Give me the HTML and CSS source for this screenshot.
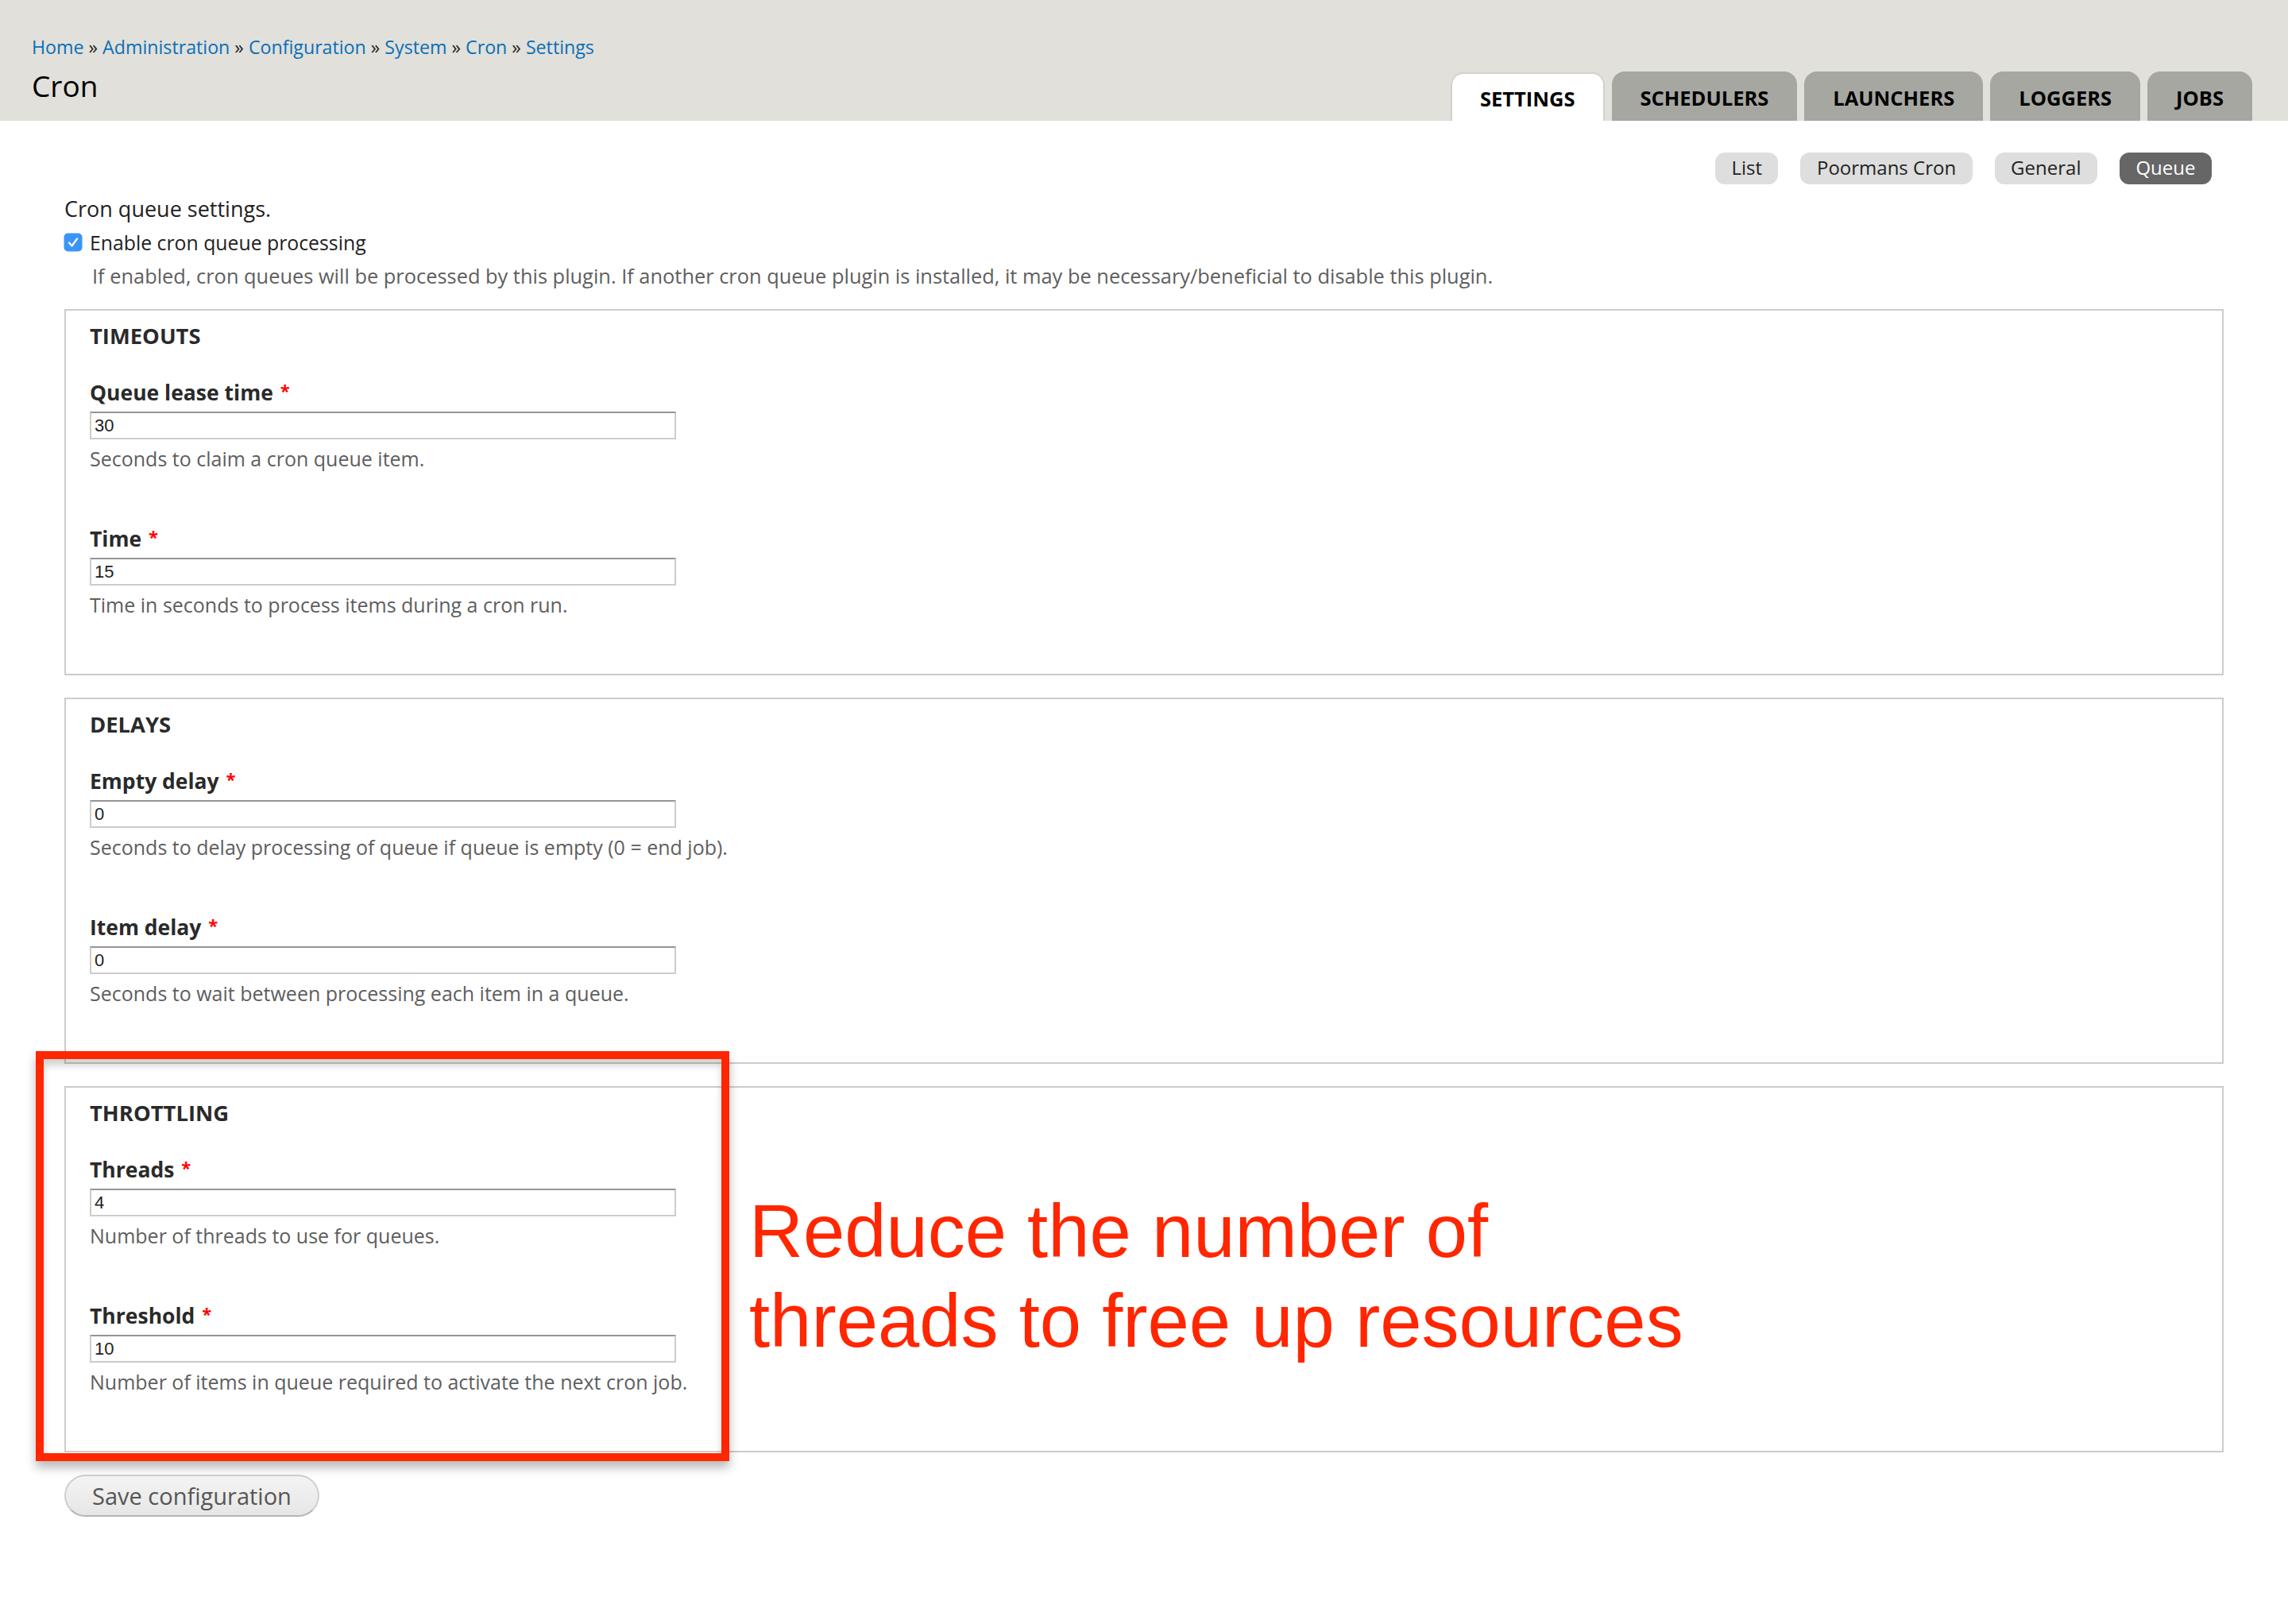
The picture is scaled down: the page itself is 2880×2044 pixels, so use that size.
FILE: index.html
```html
<!DOCTYPE html>
<html lang="en">
<head>
<meta charset="utf-8">
<title>Cron | Settings</title>
<link rel="stylesheet" href="styles.css">
</head>
<body>
<div class="page">
  <header class="page-header">
    <nav class="breadcrumb">
      <a href="#">Home</a> <span class="sep">»</span> <a href="#">Administration</a> <span class="sep">»</span> <a href="#">Configuration</a> <span class="sep">»</span> <a href="#">System</a> <span class="sep">»</span> <a href="#">Cron</a> <span class="sep">»</span> <a href="#">Settings</a>
    </nav>
    <div class="title-row">
      <h1 class="page-title">Cron</h1>
      <ul class="tabs-primary">
        <li class="tab is-active"><a href="#">SETTINGS</a></li>
        <li class="tab"><a href="#">SCHEDULERS</a></li>
        <li class="tab"><a href="#">LAUNCHERS</a></li>
        <li class="tab"><a href="#">LOGGERS</a></li>
        <li class="tab"><a href="#">JOBS</a></li>
      </ul>
    </div>
  </header>

  <main class="content">
    <ul class="tabs-secondary">
      <li class="pill"><a href="#">List</a></li>
      <li class="pill"><a href="#">Poormans Cron</a></li>
      <li class="pill"><a href="#">General</a></li>
      <li class="pill is-active"><a href="#">Queue</a></li>
    </ul>

    <form class="settings-form">
      <p class="intro">Cron queue settings.</p>
      <div class="checkbox-item">
        <span class="checkbox">
          <svg width="24" height="24" viewBox="0 0 24 24" aria-hidden="true">
            <rect x="0.5" y="0.5" width="23" height="23" rx="5" fill="#3b95f8"/>
            <path d="M7 12.5 L10.5 16.5 L17 7.5" fill="none" stroke="#fff" stroke-width="2.2" stroke-linecap="round" stroke-linejoin="round"/>
          </svg>
        </span>
        <label class="checkbox-label">Enable cron queue processing</label>
      </div>
      <div class="description indented">If enabled, cron queues will be processed by this plugin. If another cron queue plugin is installed, it may be necessary/beneficial to disable this plugin.</div>

      <section class="fieldset">
        <h2 class="fieldset-legend">TIMEOUTS</h2>
        <div class="form-item">
          <label class="form-label">Queue lease time <span class="required">*</span></label>
          <input class="form-text" type="text" value="30">
          <div class="description">Seconds to claim a cron queue item.</div>
        </div>
        <div class="form-item">
          <label class="form-label">Time <span class="required">*</span></label>
          <input class="form-text" type="text" value="15">
          <div class="description">Time in seconds to process items during a cron run.</div>
        </div>
      </section>

      <section class="fieldset">
        <h2 class="fieldset-legend">DELAYS</h2>
        <div class="form-item">
          <label class="form-label">Empty delay <span class="required">*</span></label>
          <input class="form-text" type="text" value="0">
          <div class="description">Seconds to delay processing of queue if queue is empty (0 = end job).</div>
        </div>
        <div class="form-item">
          <label class="form-label">Item delay <span class="required">*</span></label>
          <input class="form-text" type="text" value="0">
          <div class="description">Seconds to wait between processing each item in a queue.</div>
        </div>
      </section>

      <section class="fieldset">
        <h2 class="fieldset-legend">THROTTLING</h2>
        <div class="form-item">
          <label class="form-label">Threads <span class="required">*</span></label>
          <input class="form-text" type="text" value="4">
          <div class="description">Number of threads to use for queues.</div>
        </div>
        <div class="form-item">
          <label class="form-label">Threshold <span class="required">*</span></label>
          <input class="form-text" type="text" value="10">
          <div class="description">Number of items in queue required to activate the next cron job.</div>
        </div>
      </section>

      <button class="button" type="button">Save configuration</button>
    </form>
  </main>

  <div class="highlight-box"></div>
  <div class="annotation">Reduce the number of<br>threads to free up resources</div>
</div>
</body>
</html>
```

FILE: styles.css
```css
html, body {
  margin: 0;
  padding: 0;
  background: #ffffff;
}

.page {
  position: relative;
  min-height: 2044px;
  font-family: "Open Sans", "DejaVu Sans", sans-serif;
  color: #2a2a2a;
}

/* ---------- Header ---------- */
.page-header {
  background: #e1e0da;
  padding: 44px 45px 0 40px;
  height: 152px;
  box-sizing: border-box;
}

.breadcrumb {
  font-size: 23.2px;
  line-height: 30px;
  color: #222;
  white-space: nowrap;
}

.breadcrumb a {
  color: #0a6fb8;
  text-decoration: none;
}

.breadcrumb .sep {
  color: #222;
}

.title-row {
  display: flex;
  align-items: flex-end;
  justify-content: space-between;
}

.page-title {
  margin: 10px 0 20px 0;
  font-size: 37px;
  line-height: 48px;
  font-weight: 400;
  color: #000;
}

.tabs-primary {
  list-style: none;
  margin: 0;
  padding: 0;
  display: flex;
  gap: 9px;
  align-items: flex-end;
}

.tab {
  height: 62px;
  box-sizing: border-box;
  background: #a7a7a2;
  border-radius: 16px 16px 0 0;
  display: flex;
  align-items: center;
  padding: 4px 36px 0 36px;
}

.tab a {
  color: #000;
  text-decoration: none;
  font-weight: 700;
  font-size: 25.5px;
  line-height: 30px;
}

.tab.is-active {
  background: #ffffff;
  border: 2px solid #d2d1cc;
  border-bottom: none;
  height: 61px;
  padding: 3px 35px 0 35px;
}

/* ---------- Content ---------- */
.content {
  padding: 0 81px;
}

.tabs-secondary {
  list-style: none;
  margin: 40px 15px 0 0;
  padding: 0;
  display: flex;
  justify-content: flex-end;
  gap: 28px;
}

.pill {
  height: 40px;
  box-sizing: border-box;
  border-radius: 12px;
  background: #dedede;
  padding: 0 20.5px 2px 20.5px;
  display: flex;
  align-items: center;
}

.pill a {
  color: #222;
  text-decoration: none;
  font-size: 24px;
  line-height: 36px;
}

.pill.is-active {
  background: #666666;
}

.pill.is-active a {
  color: #ffffff;
}

.settings-form {
  margin-top: 11px;
}

.intro {
  margin: 0;
  font-size: 27px;
  line-height: 40px;
  color: #222;
}

.checkbox-item {
  display: flex;
  align-items: center;
  height: 40px;
  margin-top: 2px;
}

.checkbox {
  display: inline-flex;
  width: 24px;
  height: 24px;
  margin-left: -1px;
}

.checkbox-label {
  margin-left: 9px;
  font-size: 24.8px;
  line-height: 40px;
  color: #222;
}

.description {
  font-size: 25px;
  line-height: 36px;
  color: #5e5e5e;
}

.description.indented {
  margin: 2px 0 0 35px;
  font-size: 25.4px;
  line-height: 40px;
  white-space: nowrap;
}

/* ---------- Fieldsets ---------- */
.fieldset {
  margin: 22px 0 28px 0;
  border: 2px solid #cccccc;
  padding: 14px 30px 69px 30px;
}

.fieldset + .fieldset {
  margin-top: 0;
}

.fieldset-legend {
  margin: 0 0 35px 0;
  font-size: 27.4px;
  line-height: 36px;
  font-weight: 700;
  color: #2a2a2a;
}

.form-item + .form-item {
  margin-top: 65px;
}

.form-label {
  display: block;
  font-size: 26.5px;
  line-height: 36px;
  font-weight: 700;
  color: #2a2a2a;
}

.required {
  color: #ff0000;
  font-size: 22px;
  line-height: 0;
  margin-left: 2px;
  vertical-align: 4px;
}

.form-text {
  display: block;
  margin: 6px 0 0 0;
  width: 738px;
  height: 35px;
  box-sizing: border-box;
  border: 2px solid #cccccc;
  border-top-color: #959595;
  border-radius: 0;
  padding: 0 4px;
  font-family: "Liberation Sans", Arial, sans-serif;
  font-size: 22px;
  color: #222;
  background: #fff;
  outline: none;
}

.form-item .description {
  margin-top: 6px;
}

/* ---------- Button ---------- */
.button {
  display: block;
  height: 53px;
  box-sizing: border-box;
  padding: 0 33px;
  border: 2px solid #cfcfcf;
  border-bottom-color: #b4b4b4;
  border-radius: 27px;
  background: linear-gradient(#f4f4f4, #e6e6e6);
  font-family: "Open Sans", "DejaVu Sans", sans-serif;
  font-size: 29px;
  line-height: 49px;
  color: #555555;
  cursor: pointer;
}

/* ---------- Annotation overlay ---------- */
.highlight-box {
  position: absolute;
  left: 45px;
  top: 1323px;
  width: 873px;
  height: 516px;
  box-sizing: border-box;
  border: 10px solid #ff2600;
  box-shadow: 0 8px 12px rgba(0, 0, 0, 0.28), inset 0 8px 10px rgba(0, 0, 0, 0.18);
  pointer-events: none;
}

.annotation {
  position: absolute;
  left: 943px;
  top: 1493px;
  font-family: "Liberation Sans", Arial, sans-serif;
  font-size: 94px;
  line-height: 113px;
  color: #ff2600;
  white-space: nowrap;
}
```
